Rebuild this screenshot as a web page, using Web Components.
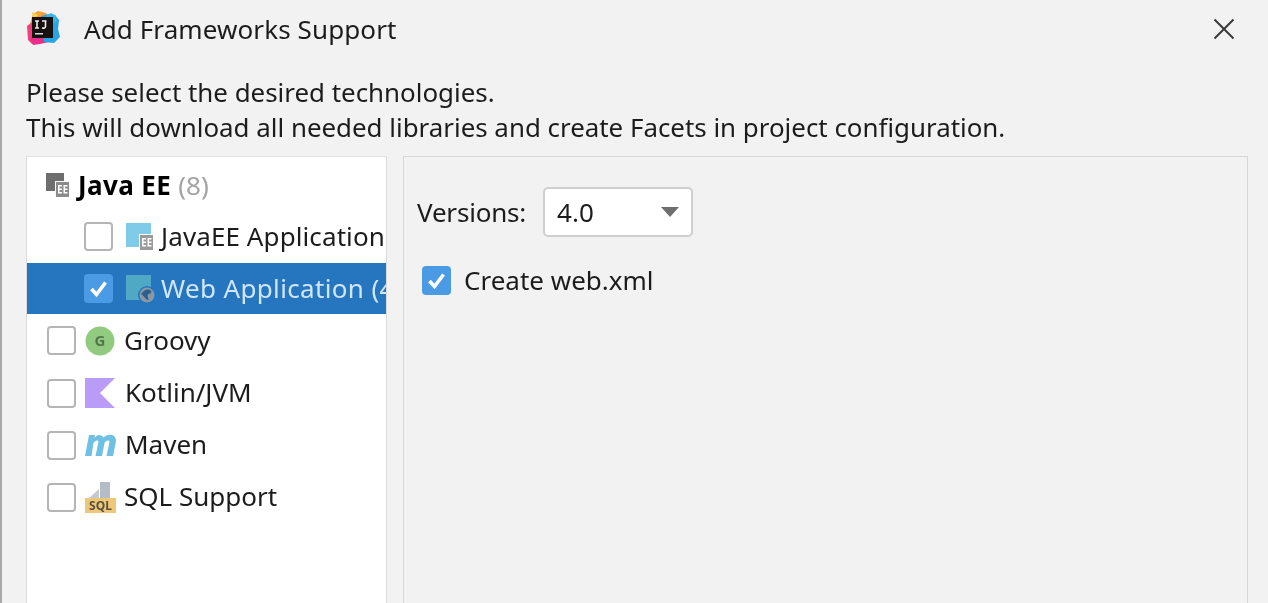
<!DOCTYPE html>
<html><head><meta charset="utf-8"><style>
html,body{margin:0;height:100%;overflow:hidden;background:#f2f2f2}
body{font-family:"Noto Sans","Open Sans",sans-serif;color:#1c1c1c}
</style></head><body>
<fw-dialog>
  <svg slot="logo" width="34" height="35" viewBox="0 0 34 35"><path d="M7 3 12 0l8 2 3 4-16 18L3 17l2-8z" fill="#f9a13a"/><path d="M6 1l6 3-5 4z" fill="#f7d14c"/><path d="M1 15l7-5 3 20-5 3-4-4z" fill="#f0407e"/><path d="M4 28 12 16l11 15-9 2-7 1z" fill="#e8308a"/><path d="M15 5l8-2 6 1 4 5-1 9 2 8-6 6-10-1z" fill="#28a4e4"/><path d="M20 5l5-3 5 3 1 6-7 2z" fill="#37b6e6"/><rect x="6" y="6" width="21" height="21" fill="#170f10"/><rect x="9" y="22" width="8" height="1.500" fill="#d8d8d8"/><path d="M9 10h4M11 10v7M9 17h4M16 10h4.500M19.500 10v5.500c0 1.500-1.500 1.800-3.500 1.500" fill="none" stroke="#eee" stroke-width="1.600"/></svg>
  <span slot="title">Add Frameworks Support</span>
  <span slot="intro">Please select the desired technologies.<br>This will download all needed libraries and create Facets in project configuration.</span>
  <fw-row slot="tree" h="57" pad="19" pb="2" ig="8" nocheck>
    <svg slot="icon" width="24" height="24" viewBox="0 0 24 24"><path d="M0 0h18v18H0z" fill="#6e6e6e"/><path d="M9 8h15v16H9z" fill="#f8f8f8"/><path d="M10 9h13v15H10z" fill="#8b8b8b"/><path d="M12 12h4v1.500h-2.500v2H16V17h-2.500v2H16v1.500h-4zM17.500 12h4v1.500H19v2h2.500V17H19v2h2.500v1.500h-4z" fill="#fff"/></svg>
    <b style="color:#000;letter-spacing:.4px">Java EE</b><span style="color:#a3a3a3;margin-left:7px">(8)</span>
  </fw-row>
  <fw-row slot="tree" h="49" pad="57" pb="5" cg="13" ig="7">
    <fw-check slot="check"></fw-check>
    <svg slot="icon" width="28" height="28" viewBox="0 0 28 28"><path d="M0 1h25v24H0z" fill="#7fcbe8"/><path d="M13 12h15v16H13z" fill="#fff"/><path d="M14 13h13v15H14z" fill="#9a9a9a"/><path d="M16 16h4v1.500h-2.500v2H20V21h-2.500v2H20v1.500h-4zM21.500 16h4v1.500H23v2h2.500V21H23v2h2.500v1.500h-4z" fill="#fff"/></svg>
    <span style="letter-spacing:.1px">JavaEE Application</span>
  </fw-row>
  <fw-row slot="tree" h="51" pad="57" cg="13" ig="5" selected>
    <fw-check slot="check" checked></fw-check>
    <svg slot="icon" width="30" height="30" viewBox="0 0 30 30"><path d="M0 1h25v25H0z" fill="#4fa8c4"/><circle cx="21" cy="21" r="9" fill="#2675bf"/><circle cx="21" cy="21" r="7.500" fill="#8a98a5"/><path d="M15 20c3-4 7-6 10-3 1 2-1 3-3 3-1 2 0 4 1 6-3 0-4-3-8-6z" fill="#2a5f90"/></svg>
    <span style="letter-spacing:.35px">Web Application (4.0)</span>
  </fw-row>
  <fw-row slot="tree" h="53" pad="20">
    <fw-check slot="check"></fw-check>
    <svg slot="icon" width="30" height="30" viewBox="0 0 30 30"><circle cx="15" cy="15" r="14.500" fill="#91cb7f"/><text x="15" y="20" text-anchor="middle" font-family="Noto Sans" font-weight="700" font-size="15" fill="#55754c">G</text></svg>
    Groovy
  </fw-row>
  <fw-row slot="tree" h="52" pad="20" ig="10">
    <fw-check slot="check"></fw-check>
    <svg slot="icon" width="30" height="30" viewBox="0 0 30 30"><path d="M0 0h30L15 15l15 15H0z" fill="#b99bf8"/></svg>
    Kotlin/JVM
  </fw-row>
  <fw-row slot="tree" h="52" pad="20" ig="9">
    <fw-check slot="check"></fw-check>
    <svg slot="icon" width="31" height="22" viewBox="0 0 31 22"><path d="M0 22 4 1h6l-.5 3C12 0 16.500 0 18.500 3.500c3.500-4 12.500-4.500 12.500 3.500L28 22h-6.500l3-14c0-2.500-3.500-2-5 1l-2.500 13h-6.500l3-14c0-2.500-3.500-2-5 1L6.500 22z" fill="#6ec1e4"/></svg>
    Maven
  </fw-row>
  <fw-row slot="tree" h="52" pad="20" ig="8">
    <fw-check slot="check"></fw-check>
    <svg slot="icon" width="31" height="31" viewBox="0 0 31 31"><path d="M4 16 14 7v9z" fill="#c3c9d1"/><path d="M15 0h10v16H15z" fill="#b4bcc6"/><rect x="0" y="16" width="31" height="15" fill="#edc879"/><text x="15.500" y="28" text-anchor="middle" font-family="Noto Sans" font-weight="700" font-size="12" fill="#5b5140">SQL</text></svg>
    SQL Support
  </fw-row>
  <fw-options slot="options"></fw-options>
</fw-dialog>
<script>
function def(name, html, init){
  customElements.define(name, class extends HTMLElement{
    constructor(){super();this.attachShadow({mode:'open'}).innerHTML=html;}
    connectedCallback(){ if(init) init(this); }
  });
}
def('fw-dialog',`<style>
:host{display:flex;flex-direction:column;height:603px;box-sizing:border-box;border-left:2px solid #a9a9a9;overflow:hidden;font-size:26px;filter:blur(.45px)}
header{display:flex;align-items:center;height:58px;flex:none;padding:0 32px 0 24px;box-sizing:border-box}
.logo{display:flex;width:58px;flex:none;margin-bottom:2px}
.title{flex:1;letter-spacing:.1px}
.close{display:flex}
.intro{height:98px;flex:none;box-sizing:border-box;padding:17px 0 0 24px;line-height:35px;font-size:25.9px}
.body{display:flex;flex:1;gap:16px;padding-right:20px;padding-left:24px;min-height:0}
.tree{width:361px;flex:none;box-sizing:border-box;background:#fff;border:1px solid #dadada;border-top-color:#e0e0e0;border-bottom:0;overflow:hidden}
.panel{flex:1;box-sizing:border-box;border:1px solid #d6d6d6;border-bottom:0}
</style>
<header><div class="logo"><slot name="logo"></slot></div><div class="title"><slot name="title"></slot></div>
<div class="close"><svg width="24" height="24" viewBox="0 0 24 24"><path d="M2.500 2.500l19 19M21.500 2.500l-19 19" stroke="#3a3a3a" stroke-width="2" fill="none"/></svg></div></header>
<div class="intro"><slot name="intro"></slot></div>
<div class="body"><div class="tree"><slot name="tree"></slot></div><div class="panel"><slot name="options"></slot></div></div>`);
def('fw-row',`<style>
:host{display:flex;align-items:center;white-space:nowrap;overflow:hidden;box-sizing:border-box}
:host([selected]){background:#2675bf;color:#cfe6fb}
.check{display:flex;margin-right:var(--cg,9px)}
:host([nocheck]) .check{display:none}
.icon{display:flex;margin-right:var(--ig,9px);align-items:center;justify-content:center}
.label{display:flex;padding-bottom:var(--lb,2px)}
</style><div class="check"><slot name="check"></slot></div><div class="icon"><slot name="icon"></slot></div><div class="label"><slot></slot></div>`,
el=>{const a=n=>el.getAttribute(n);
el.style.height=a('h')+'px';el.style.paddingLeft=a('pad')+'px';
if(a('pb')){el.style.paddingBottom=a('pb')+'px';el.style.setProperty('--lb','0px');}
if(a('cg'))el.style.setProperty('--cg',a('cg')+'px');
if(a('ig'))el.style.setProperty('--ig',a('ig')+'px');});
def('fw-check',`<style>
:host{display:block;width:29px;height:29px;box-sizing:border-box;border:2px solid #b5b5b5;border-radius:4px;background:#fff}
:host([checked]){background:#4a9be4;border-color:#4a9be4}
svg{display:none;width:25px;height:25px}
:host([checked]) svg{display:block}
</style><svg viewBox="0 0 25 25"><path d="M5.500 13l5 5.500 9-12" fill="none" stroke="#fff" stroke-width="3.600"/></svg>`);
def('fw-options',`<style>
:host{display:block;padding:30px 0 0 13px}
.ver{display:flex;align-items:center;gap:17px;height:50px}
.lab{letter-spacing:-.2px}
.combo{display:flex;align-items:center;justify-content:space-between;box-sizing:border-box;width:150px;height:50px;background:#fff;border:2px solid #cfcfcf;border-radius:5px;padding:0 12px}
.arrow{width:0;height:0;border:9px solid transparent;border-top:10px solid #6f6f6f;border-bottom:0}
.cb{display:flex;align-items:center;gap:13px;margin:28px 0 0 5px;height:30px}
</style><div class="ver"><span class="lab">Versions:</span><div class="combo">4.0<span class="arrow"></span></div></div>
<div class="cb"><fw-check checked></fw-check>Create web.xml</div>`);
</script>
</body></html>
